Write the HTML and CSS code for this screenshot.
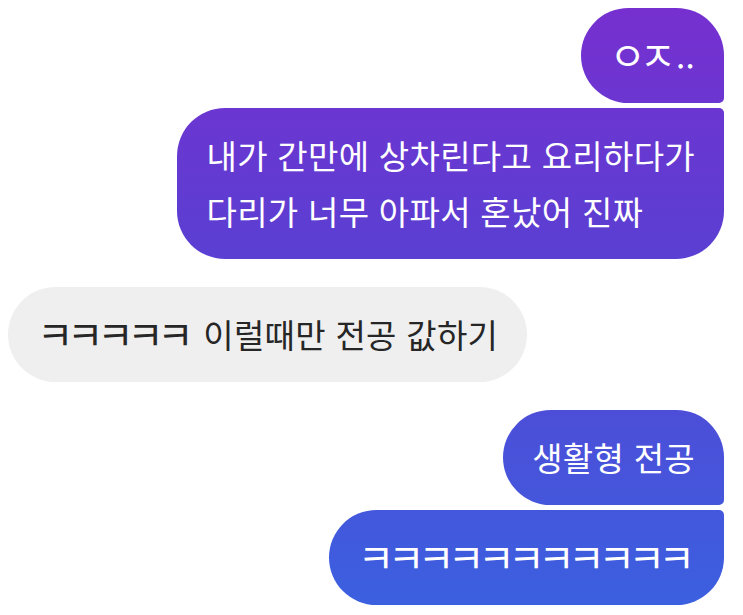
FILE: index.html
```html
<!DOCTYPE html>
<html lang="ko">
<head>
<meta charset="utf-8">
<link rel="stylesheet" href="styles.css">
</head>
<body>
<main class="chat">
  <div class="group mine">
    <div class="bubble sent first"><span class="jamo">ㅇㅈ</span>..</div>
    <div class="bubble sent last">내가 간만에 상차린다고 요리하다가<br>다리가 너무 아파서 혼났어 진짜</div>
  </div>
  <div class="group theirs">
    <div class="bubble received"><span class="jamo">ㅋㅋㅋㅋㅋ</span> 이럴때만 전공 값하기</div>
  </div>
  <div class="group mine">
    <div class="bubble sent first">생활형 전공</div>
    <div class="bubble sent last"><span class="jamo">ㅋㅋㅋㅋㅋㅋㅋㅋㅋㅋㅋ</span></div>
  </div>
</main>
</body>
</html>
```
FILE: styles.css
```css
html, body {
  margin: 0;
  padding: 0;
  background: #ffffff;
}
body {
  width: 743px;
  height: 615px;
  overflow: hidden;
  font-family: "Noto Sans CJK KR", "Noto Sans", sans-serif;
}
.chat {
  display: flex;
  flex-direction: column;
  gap: 28px;
  padding: 8px 19px 0 8px;
}
.group {
  display: flex;
  flex-direction: column;
  gap: 5px;
}
.mine { align-items: flex-end; }
.theirs { align-items: flex-start; }
.bubble {
  font-size: 33px;
  line-height: 56px;
  height: 56px;
  padding: 19px 29px 20px;
  border-radius: 48px;
  white-space: nowrap;
  letter-spacing: 0.3px;
}
.bubble.last { height: auto; }
.sent {
  color: #ffffff;
  background: linear-gradient(180deg, #772fd0 0px, #5b3fd2 250px, #3a61e0 615px) fixed;
}
.sent.first { border-bottom-right-radius: 5px; }
.sent.last { border-top-right-radius: 5px; }
.received {
  background: #efefef;
  color: #262626;
}
.jamo {
  font-size: 1.2em;
  letter-spacing: -0.16em;
  line-height: 1;
  vertical-align: -0.04em;
  margin-right: 0.16em;
}
```
